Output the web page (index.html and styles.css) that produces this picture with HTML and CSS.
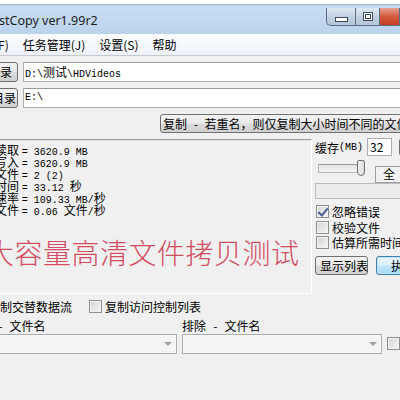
FILE: index.html
```html
<!DOCTYPE html>
<html lang="zh-CN">
<head>
    <meta charset="UTF-8">
    <title>FastCopy ver1.99r2</title>
    <link rel="stylesheet" href="styles.css">
</head>
<body>
    <div class="titlebar">
        <span class="title">stCopy ver1.99r2</span>
        <div class="caps">
            <span class="cap cap-min"><i class="ico-min"></i></span>
            <span class="cap cap-max"><i class="ico-max"></i></span>
            <span class="cap cap-close"></span>
        </div>
    </div>

    <div class="menubar">
        <span class="menu first">文件(F)</span>
        <span class="menu">任务管理(J)</span>
        <span class="menu">设置(S)</span>
        <span class="menu">帮助</span>
    </div>

    <div class="content">
        <!-- 来源 / 目标 -->
        <div class="dirrow">
            <span class="btn dirbtn src">目录</span>
            <div class="path">D:\<span class="k">测试</span>\HDVideos</div>
        </div>
        <div class="dirrow">
            <span class="btn dirbtn dst">目录</span>
            <div class="path">E:\</div>
        </div>

        <div class="moderow">
            <span class="btn mode">复制 - 若重名，则仅复制大小时间不同的文件</span>
        </div>

        <div class="main">
            <div class="log">
                <div class="line"><span class="k">读取 </span>= 3620.9 MB</div>
                <div class="line"><span class="k">写入 </span>= 3620.9 MB</div>
                <div class="line"><span class="k">文件 </span>= 2 (2)</div>
                <div class="line"><span class="k">时间 </span>= 33.12 <span class="k">秒</span></div>
                <div class="line"><span class="k">速率 </span>= 109.33 MB/<span class="k">秒</span></div>
                <div class="line"><span class="k">文件 </span>= 0.06 <span class="k">文件</span>/<span class="k">秒</span></div>
                <div class="banner">大容量高清文件拷贝测试</div>
            </div>

            <div class="side">
                <div class="cache">
                    <span class="k">缓存</span><span class="mono">(MB)</span>
                    <span class="num">32</span>
                    <span class="btn tiny"></span>
                </div>
                <div class="sliderrow">
                    <div class="slider"><span class="track"></span><span class="thumb"></span></div>
                    <span class="btn all">全</span>
                </div>
                <div class="progress"></div>
                <label class="chk"><span class="box on"></span>忽略错误</label>
                <label class="chk"><span class="box"></span>校验文件</label>
                <label class="chk"><span class="box"></span>估算所需时间</label>
                <div class="actions">
                    <span class="btn list">显示列表</span>
                    <span class="btn run">执行</span>
                </div>
            </div>
        </div>

        <div class="opts">
            <label class="chk first"><span class="box"></span>复制交替数据流</label>
            <label class="chk acl"><span class="box"></span>复制访问控制列表</label>
        </div>

        <div class="filters">
            <div class="filter inc">
                <div class="cap-text">包含 - 文件名</div>
                <div class="combo"><span class="arrow"></span></div>
            </div>
            <div class="filter exc">
                <div class="cap-text">排除 - 文件名</div>
                <div class="combo"><span class="arrow"></span></div>
            </div>
            <span class="box filterbox"></span>
        </div>
    </div>
</body>
</html>
```

FILE: styles.css
```css
* {
    box-sizing: border-box;
}

html,
body {
    margin: 0;
}

body {
    width: 400px;
    height: 400px;
    overflow: hidden;
    background: #f0f0f0;
    font-family: "Noto Sans CJK SC", sans-serif;
    font-size: 12px;
    color: #000;
}

/* 标题栏 */

.titlebar {
    height: 34px;
    display: flex;
    background: linear-gradient(#fdfeff 0, #fdfeff 4px, #a9bdd4 4px, #a9bdd4 5px, #c9def3 6px, #bad2eb 100%);
}

.title {
    margin: 12px 0 0 -1px;
    font-family: "Noto Sans", sans-serif;
    font-size: 12.5px;
    line-height: 18px;
    color: #1e1e1e;
    white-space: nowrap;
}

.caps {
    margin: 8px 0 0 auto;
    display: flex;
    height: 18px;
}

.cap {
    display: flex;
    align-items: center;
    justify-content: center;
    border: 1px solid #5d6e84;
    border-top: none;
    background: linear-gradient(#dfe8f2, #c3d2e3 50%, #b2c4d9);
}

.cap-min {
    width: 29px;
    border-right: none;
    border-radius: 0 0 0 5px;
}

.cap-max {
    width: 25px;
}

.cap-close {
    width: 20px;
    border-left: none;
    background: linear-gradient(#e6a091, #d3593f 50%, #c43e22);
}

.ico-min {
    display: block;
    width: 13px;
    height: 5px;
    margin-top: 6px;
    background: #fff;
    border: 1px solid #3e4a5a;
}

.ico-max {
    display: block;
    width: 10px;
    height: 9px;
    border: 1px solid #3e4a5a;
    box-shadow: inset 0 0 0 1px #fff, inset 0 0 0 2px #3e4a5a;
    background: #fff;
}

/* 菜单 */

.menubar {
    height: 22px;
    display: flex;
    align-items: center;
    gap: 14px;
    background: linear-gradient(#fdfdfe, #eef2f8);
    border-bottom: 1px solid #c5cad2;
    white-space: nowrap;
}

.menu.first {
    margin-left: -30px;
}

/* 主体 */

.content {
    padding-top: 6px;
}

.btn {
    display: block;
    border: 1px solid #707070;
    border-radius: 3px;
    background: linear-gradient(#f2f2f2, #ebebeb 48%, #dddddd 52%, #cfcfcf);
    white-space: nowrap;
    line-height: 18px;
}

.dirrow {
    display: flex;
    gap: 5px;
    height: 20px;
    margin-bottom: 6px;
}

.dirbtn {
    flex-shrink: 0;
    width: 50px;
    margin-left: -32px;
    text-align: right;
}

.dirbtn.src {
    padding-right: 5px;
}

.dirbtn.dst {
    padding-right: 1px;
}

.path {
    flex: 1;
    margin-right: -20px;
    background: #fff;
    border: 1px solid #abadb3;
    border-top-color: #9a9ca2;
    padding-left: 1px;
    font-family: "Liberation Mono", monospace;
    font-size: 10px;
    line-height: 18px;
}

.k {
    font-family: "Noto Sans CJK SC", sans-serif;
    font-size: 12px;
}

.mono {
    font-family: "Liberation Mono", monospace;
    font-size: 10px;
}

.moderow {
    margin-top: 3px;
    padding-left: 160px;
    height: 19px;
}

.mode {
    width: 270px;
    line-height: 17px;
    padding-left: 2px;
    word-spacing: 4px;
}

.main {
    display: flex;
    gap: 3px;
    margin: 6px 0 0 -20px;
    height: 155px;
}

.log {
    flex-shrink: 0;
    width: 332px;
    border: 1px solid;
    border-color: #9a9a9a #fff #fff #9a9a9a;
    box-shadow: inset 1px 1px 0 #e3e3e3;
    padding: 4px 0 0 14px;
    font-family: "Liberation Mono", monospace;
    font-size: 10px;
    white-space: nowrap;
    overflow: hidden;
}

.line {
    height: 12px;
    line-height: 12px;
}

.banner {
    margin: 21px 0 0 -9px;
    font-family: "Noto Sans CJK SC", sans-serif;
    font-weight: 300;
    font-size: 28px;
    line-height: 30px;
    letter-spacing: 0.5px;
    color: #d34c60;
}

.side {
    flex-shrink: 0;
    width: 100px;
}

.cache {
    display: flex;
    align-items: center;
    height: 18px;
    margin-top: -1px;
    white-space: nowrap;
}

.num {
    width: 25px;
    height: 18px;
    margin-left: 4px;
    background: #fff;
    border: 1px solid #abadb3;
    padding-left: 2px;
    line-height: 16px;
}

.tiny {
    width: 14px;
    height: 18px;
    margin-left: 7px;
}

.sliderrow {
    display: flex;
    height: 27px;
}

.slider {
    position: relative;
    width: 52px;
    height: 18px;
    margin: 4px 0 0 3px;
}

.track {
    display: block;
    width: 46px;
    height: 9px;
    margin-top: 4px;
    border: 1px solid #b8b8b8;
    border-top-color: #9d9d9d;
    background: linear-gradient(#e2e2e2, #f4f4f4);
}

.thumb {
    position: absolute;
    left: 39px;
    top: 0;
    width: 8px;
    height: 16px;
    border: 1px solid #707070;
    border-radius: 2px 2px 4px 4px;
    background: linear-gradient(90deg, #f3f3f3, #dcdcdc);
}

.all {
    width: 40px;
    height: 17px;
    margin: 10px 0 0 5px;
    padding-left: 7px;
    line-height: 14px;
    border-radius: 0;
    border-color: #9e9e9e;
    background: #f2f2f2;
}

.progress {
    height: 16px;
    border: 1px solid #bcbcbc;
    background: #ececec;
}

.chk {
    display: flex;
    align-items: center;
    gap: 3px;
    height: 15.5px;
    white-space: nowrap;
}

.side .chk:first-of-type {
    margin-top: 5px;
}

.box {
    flex-shrink: 0;
    position: relative;
    width: 13px;
    height: 13px;
    margin-left: 1px;
    border: 1px solid #8e8f8f;
    background: linear-gradient(135deg, #d2d2d2, #f7f7f7);
    box-shadow: inset 0 0 0 1px #f2f2f2;
}

.box.on::after {
    content: "";
    position: absolute;
    left: 3px;
    top: 0;
    width: 4px;
    height: 8px;
    border: solid #4a5f97;
    border-width: 0 2px 2px 0;
    transform: rotate(40deg);
}

.actions {
    display: flex;
    gap: 8px;
    margin-top: 5px;
}

.list {
    width: 53px;
    height: 19px;
    padding-left: 4px;
    line-height: 17px;
}

.run {
    width: 40px;
    height: 19px;
    padding-left: 14px;
    line-height: 17px;
    border-color: #3c7fb1;
    background: linear-gradient(#eaf6fd, #d9f0fc 48%, #bee6fd 52%, #a7d9f5);
    box-shadow: inset 0 0 0 1px #c4e5f6;
}

/* 选项 */

.opts {
    display: flex;
    height: 16px;
    margin-top: 5px;
}

.opts .chk.first {
    margin-left: -29px;
}

.opts .chk.acl {
    margin-left: 16px;
}

.filters {
    display: flex;
    align-items: flex-end;
    gap: 5px;
    margin-top: 3px;
}

.filter.inc {
    margin-left: -40px;
    width: 218px;
}

.filter.exc {
    width: 201px;
}

.cap-text {
    height: 16px;
    line-height: 16px;
    white-space: nowrap;
    word-spacing: 4.5px;
}

.filter.inc .cap-text {
    padding-left: 7px;
}

.combo {
    position: relative;
    height: 20px;
    border: 1px solid #abadb3;
    background: #f4f4f4;
    box-shadow: inset 0 0 0 1px #f9f9f9;
}

.arrow {
    position: absolute;
    right: 4px;
    top: 7px;
    border: 4px solid transparent;
    border-top: 4px solid #a0a0a0;
}

.filterbox {
    margin: 0 0 4px 0;
}
```
